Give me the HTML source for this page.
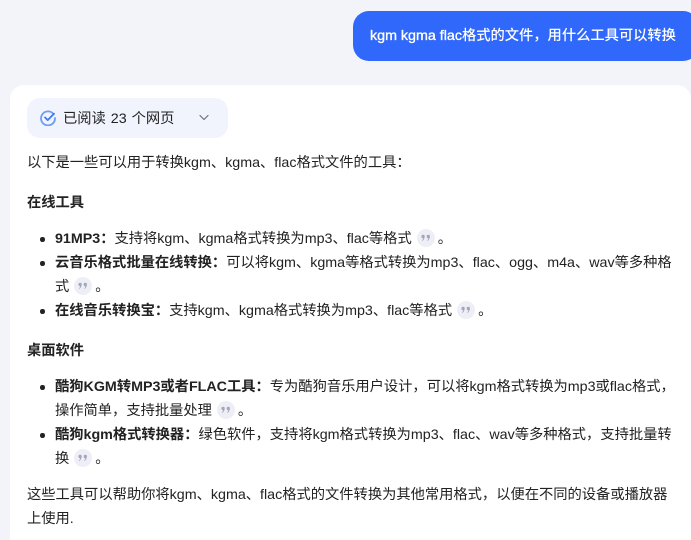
<!DOCTYPE html>
<html lang="zh">
<head>
<meta charset="utf-8">
<style>
html,body{margin:0;padding:0;width:691px;height:540px;overflow:hidden;background:#f3f4f9}
body{position:relative;font-family:"Liberation Sans","Noto Sans CJK SC",sans-serif;font-size:14.28px;color:#222}
.bubble{position:absolute;left:353px;top:11px;width:346px;height:50px;background:#3068fb;border-radius:16px;color:#fff;font-weight:500;font-size:14.28px;line-height:51px;box-sizing:border-box;padding-left:17px;white-space:nowrap}
.bubble span{-webkit-text-stroke:.35px #fff}
.card{position:absolute;left:10px;top:85px;width:681px;height:470px;background:#fff;border-radius:14px 14px 0 0}
.pill{position:absolute;left:27px;top:98px;width:201px;height:40px;background:#f1f4fd;border-radius:13px}
.pilltext{position:absolute;left:63px;top:99px;line-height:40px;white-space:nowrap;word-spacing:1px}
.l{position:absolute;white-space:nowrap;line-height:24px;height:24px}
.dot{position:absolute;width:4.5px;height:4.5px;border-radius:50%;background:#222}
.q{display:inline-block;position:relative;width:18px;height:18px;border-radius:50%;background:#eeeff6;vertical-align:-4px;margin:0 3px 0 5px}
.q svg{position:absolute;left:4px;top:5px}
b{font-weight:700}
</style>
</head>
<body>
<div class="bubble"><span>kgm kgma flac</span>格式的文件，用什么工具可以转换</div>
<div class="card"></div>
<div class="pill"></div>
<svg style="position:absolute;left:40px;top:110px" width="16" height="16" viewBox="0 0 16 16" fill="none"><path d="M13.4 3.9A7 7 0 1 0 15 8" stroke="#6f9cf5" stroke-width="1.8" stroke-linecap="round"/><path d="M5 7.4l2.7 2.7 6.3-6.4" stroke="#3f78f2" stroke-width="1.8" stroke-linecap="round" stroke-linejoin="round"/></svg>
<div class="pilltext">已阅读 23 个网页</div>
<svg style="position:absolute;left:199px;top:114px" width="10" height="8" viewBox="0 0 10 8" fill="none"><path d="M1 1.5l4 4 4-4" stroke="#6b7280" stroke-width="1.2" stroke-linecap="round" stroke-linejoin="round"/></svg>

<div class="l" style="left:27px;top:151px">以下是一些可以用于转换kgm、kgma、flac格式文件的工具：</div>
<div class="l" style="left:27px;top:191px"><b>在线工具</b></div>

<div class="dot" style="left:40px;top:237px"></div>
<div class="l" style="left:55px;top:227px"><b>91MP3：</b>支持将kgm、kgma格式转换为mp3、flac等格式<span class="q"><svg width="10" height="8" viewBox="0 0 10 8"><path d="M2.2 .8a1.5 1.5 0 0 1 1.5 1.6c0 2-1 3.6-2.4 4.6l-.4-.5c.7-.8 1.1-1.4 1.2-2.3A1.5 1.5 0 0 1 2.2 .8zM7.4 .8a1.5 1.5 0 0 1 1.5 1.6c0 2-1 3.6-2.4 4.6l-.4-.5c.7-.8 1.1-1.4 1.2-2.3A1.5 1.5 0 0 1 7.4 .8z" fill="#a2a7ba"/></svg></span>。</div>
<div class="dot" style="left:40px;top:261px"></div>
<div class="l" style="left:55px;top:251px"><b>云音乐格式批量在线转换：</b>可以将kgm、kgma等格式转换为mp3、flac、ogg、m4a、wav等多种格</div>
<div class="l" style="left:55px;top:275px">式<span class="q"><svg width="10" height="8" viewBox="0 0 10 8"><path d="M2.2 .8a1.5 1.5 0 0 1 1.5 1.6c0 2-1 3.6-2.4 4.6l-.4-.5c.7-.8 1.1-1.4 1.2-2.3A1.5 1.5 0 0 1 2.2 .8zM7.4 .8a1.5 1.5 0 0 1 1.5 1.6c0 2-1 3.6-2.4 4.6l-.4-.5c.7-.8 1.1-1.4 1.2-2.3A1.5 1.5 0 0 1 7.4 .8z" fill="#a2a7ba"/></svg></span>。</div>
<div class="dot" style="left:40px;top:309px"></div>
<div class="l" style="left:55px;top:299px"><b>在线音乐转换宝：</b>支持kgm、kgma格式转换为mp3、flac等格式<span class="q"><svg width="10" height="8" viewBox="0 0 10 8"><path d="M2.2 .8a1.5 1.5 0 0 1 1.5 1.6c0 2-1 3.6-2.4 4.6l-.4-.5c.7-.8 1.1-1.4 1.2-2.3A1.5 1.5 0 0 1 2.2 .8zM7.4 .8a1.5 1.5 0 0 1 1.5 1.6c0 2-1 3.6-2.4 4.6l-.4-.5c.7-.8 1.1-1.4 1.2-2.3A1.5 1.5 0 0 1 7.4 .8z" fill="#a2a7ba"/></svg></span>。</div>

<div class="l" style="left:27px;top:339px"><b>桌面软件</b></div>

<div class="dot" style="left:40px;top:385px"></div>
<div class="l" style="left:55px;top:375px"><b>酷狗KGM转MP3或者FLAC工具：</b>专为酷狗音乐用户设计，可以将kgm格式转换为mp3或flac格式，</div>
<div class="l" style="left:55px;top:399px">操作简单，支持批量处理<span class="q"><svg width="10" height="8" viewBox="0 0 10 8"><path d="M2.2 .8a1.5 1.5 0 0 1 1.5 1.6c0 2-1 3.6-2.4 4.6l-.4-.5c.7-.8 1.1-1.4 1.2-2.3A1.5 1.5 0 0 1 2.2 .8zM7.4 .8a1.5 1.5 0 0 1 1.5 1.6c0 2-1 3.6-2.4 4.6l-.4-.5c.7-.8 1.1-1.4 1.2-2.3A1.5 1.5 0 0 1 7.4 .8z" fill="#a2a7ba"/></svg></span>。</div>
<div class="dot" style="left:40px;top:433px"></div>
<div class="l" style="left:55px;top:423px"><b>酷狗kgm格式转换器：</b>绿色软件，支持将kgm格式转换为mp3、flac、wav等多种格式，支持批量转</div>
<div class="l" style="left:55px;top:447px">换<span class="q"><svg width="10" height="8" viewBox="0 0 10 8"><path d="M2.2 .8a1.5 1.5 0 0 1 1.5 1.6c0 2-1 3.6-2.4 4.6l-.4-.5c.7-.8 1.1-1.4 1.2-2.3A1.5 1.5 0 0 1 2.2 .8zM7.4 .8a1.5 1.5 0 0 1 1.5 1.6c0 2-1 3.6-2.4 4.6l-.4-.5c.7-.8 1.1-1.4 1.2-2.3A1.5 1.5 0 0 1 7.4 .8z" fill="#a2a7ba"/></svg></span>。</div>

<div class="l" style="left:27px;top:483px">这些工具可以帮助你将kgm、kgma、flac格式的文件转换为其他常用格式，以便在不同的设备或播放器</div>
<div class="l" style="left:27px;top:507px">上使用.</div>
</body>
</html>
